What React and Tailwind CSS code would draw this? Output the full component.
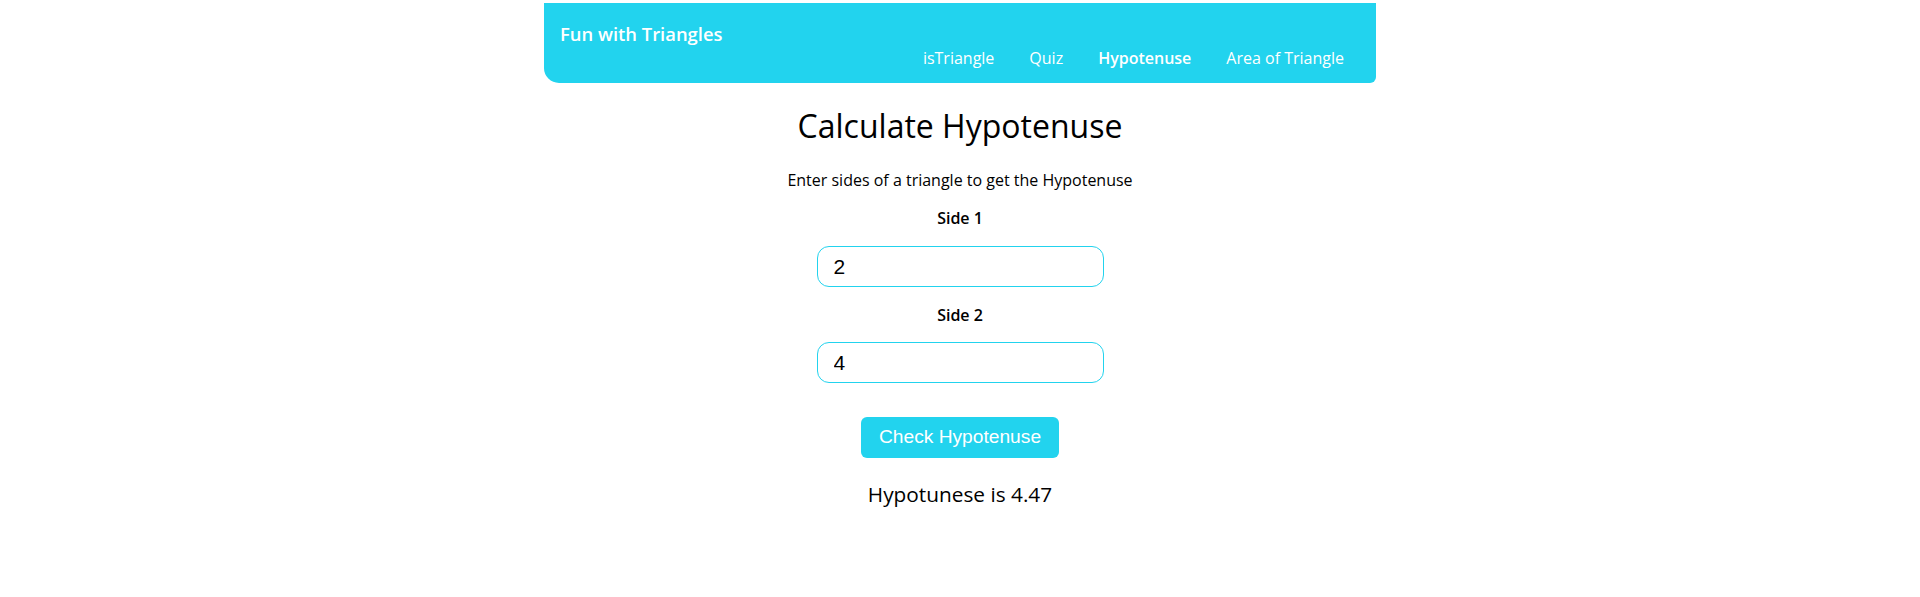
import React from "react";

export default function App() {
  const os = { fontFamily: '"Open Sans", "Noto Sans", sans-serif' };
  return (
    <div className="min-h-[597px] bg-white" style={os}>
      <nav className="mx-auto mt-[3px] flex h-[80px] w-[832px] flex-col bg-[#22d3ee] pl-4 pr-8 rounded-bl-[15px] rounded-br-[6px]">
        <div className="pt-[18px] text-[18.4px] font-semibold leading-[26px] text-white">Fun with Triangles</div>
        <ul className="mt-auto mb-[15px] flex justify-end gap-[35px] text-[16px] leading-[22px] text-white">
          <li>isTriangle</li>
          <li>Quiz</li>
          <li className="font-semibold">Hypotenuse</li>
          <li>Area of Triangle</li>
        </ul>
      </nav>
      <main className="flex flex-col items-center text-black">
        <h1 className="mt-[21px] text-[32px] leading-[44px]">Calculate Hypotenuse</h1>
        <p className="mt-[21px] text-[16px] leading-[22px]">Enter sides of a triangle to get the Hypotenuse</p>
        <label className="mt-[16px] text-[16px] font-semibold leading-[22px]">Side 1</label>
        <input
          className="mt-[17px] h-[41px] w-[287px] rounded-[12px] border border-[#22d3ee] pl-4 text-[21px] text-black outline-none"
          style={{ fontFamily: '"Liberation Sans", Arial, sans-serif' }}
          defaultValue="2"
        />
        <label className="mt-[17px] text-[16px] font-semibold leading-[22px]">Side 2</label>
        <input
          className="mt-[16px] h-[41px] w-[287px] rounded-[12px] border border-[#22d3ee] pl-4 text-[21px] text-black outline-none"
          style={{ fontFamily: '"Liberation Sans", Arial, sans-serif' }}
          defaultValue="4"
        />
        <button
          className="mt-[34px] h-[41px] w-[198px] rounded-[6px] bg-[#22d3ee] text-[19.2px] text-white"
          style={{ fontFamily: '"Liberation Sans", Arial, sans-serif' }}
        >
          Check Hypotenuse
        </button>
        <div className="mt-[22px] text-[20.8px] font-medium leading-[28px]">Hypotunese is 4.47</div>
      </main>
    </div>
  );
}
